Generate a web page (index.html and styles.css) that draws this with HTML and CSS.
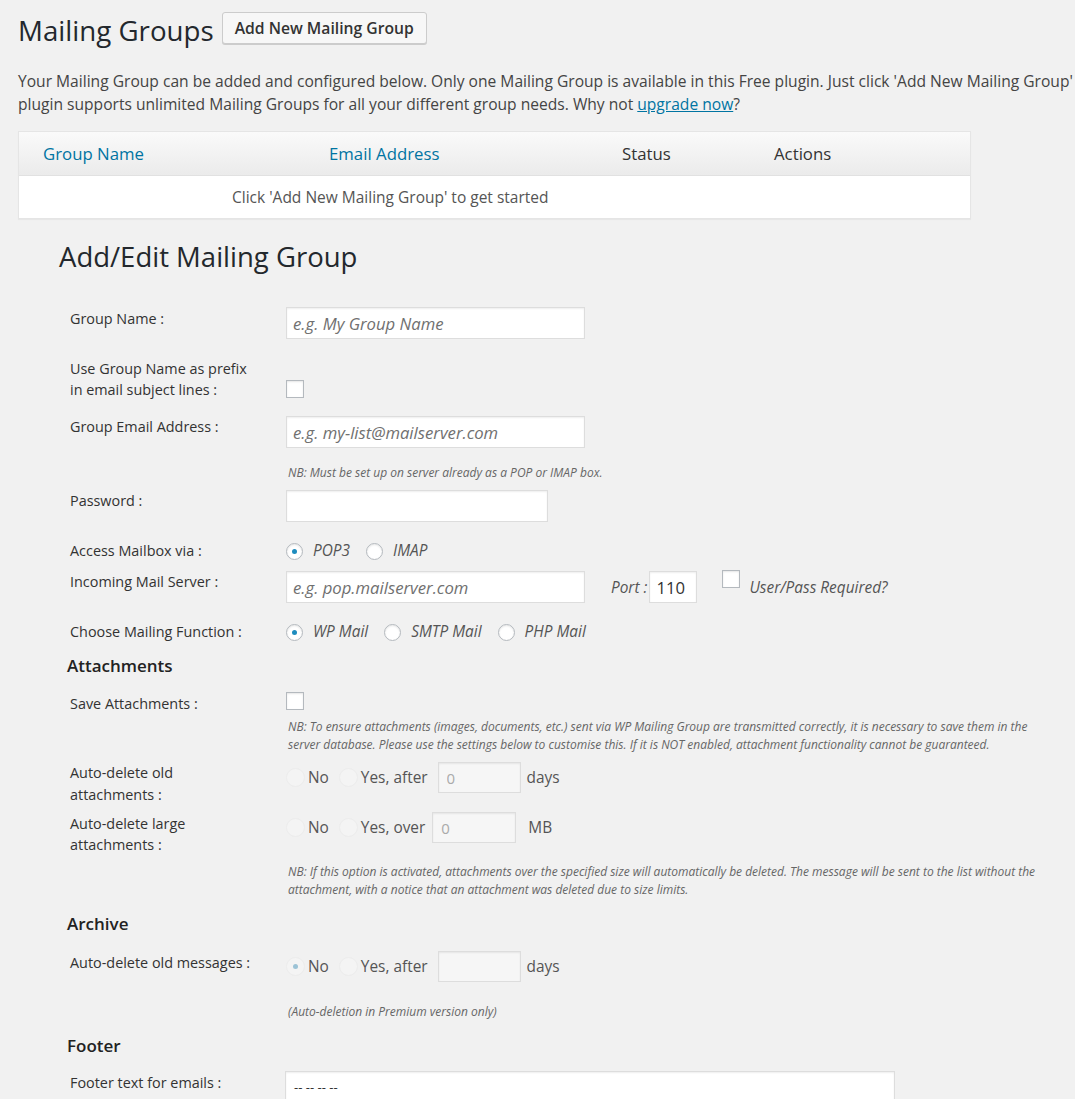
FILE: index.html
```html
<!DOCTYPE html>
<html>
<head>
<meta charset="utf-8">
<title>Mailing Groups</title>
<link rel="stylesheet" href="styles.css">
</head>
<body>
<div class="wrap">
  <div class="title-row">
    <h1 class="page-title">Mailing Groups</h1>
    <a class="add-btn">Add New Mailing Group</a>
  </div>
  <p class="intro">Your Mailing Group can be added and configured below. Only one Mailing Group is available in this Free plugin. Just click 'Add New Mailing Group' to get started. The Premium version of this<br>plugin supports unlimited Mailing Groups for all your different group needs. Why not <a class="link">upgrade now</a>?</p>

  <div class="list-table">
    <div class="list-head">
      <span class="col sortable">Group Name</span>
      <span class="col sortable">Email Address</span>
      <span class="col">Status</span>
      <span class="col">Actions</span>
    </div>
    <div class="list-body">Click 'Add New Mailing Group' to get started</div>
  </div>

  <h2 class="edit-title">Add/Edit Mailing Group</h2>

  <div class="form">
    <div class="row r1">
      <label class="lbl pt2">Group Name :</label>
      <div class="fld"><input class="text w299" type="text" placeholder="e.g. My Group Name"></div>
    </div>
    <div class="row r2">
      <label class="lbl lh21">Use Group Name as prefix<br>in email subject lines :</label>
      <div class="fld"><span class="checkbox cb-low"></span></div>
    </div>
    <div class="row r3">
      <label class="lbl lh22">Group Email Address :</label>
      <div class="fld"><input class="text w299" type="text" placeholder="e.g. my-list@mailserver.com"></div>
    </div>
    <p class="note n1">NB: Must be set up on server already as a POP or IMAP box.</p>
    <div class="row r4">
      <label class="lbl pt1">Password :</label>
      <div class="fld"><input class="text w262" type="password"></div>
    </div>
    <div class="row r5">
      <label class="lbl">Access Mailbox via :</label>
      <div class="fld opts">
        <span class="radio checked"></span><span class="opt-i">POP3</span>
        <span class="radio"></span><span class="opt-i">IMAP</span>
      </div>
    </div>
    <div class="row r6">
      <label class="lbl lh22">Incoming Mail Server :</label>
      <div class="fld inline">
        <input class="text w299" type="text" placeholder="e.g. pop.mailserver.com">
        <span class="port-lbl">Port :</span>
        <input class="text port" type="text" value="110">
        <span class="checkbox cb-port"></span>
        <span class="opt-i userpass">User/Pass Required?</span>
      </div>
    </div>
    <div class="row r7">
      <label class="lbl">Choose Mailing Function :</label>
      <div class="fld opts">
        <span class="radio checked"></span><span class="opt-i">WP Mail</span>
        <span class="radio"></span><span class="opt-i">SMTP Mail</span>
        <span class="radio"></span><span class="opt-i">PHP Mail</span>
      </div>
    </div>

    <h3 class="section h-att">Attachments</h3>
    <div class="row r8">
      <label class="lbl pt2">Save Attachments :</label>
      <div class="fld"><span class="checkbox"></span></div>
    </div>
    <p class="note n2">NB: To ensure attachments (images, documents, etc.) sent via WP Mailing Group are transmitted correctly, it is necessary to save them in the<br>server database. Please use the settings below to customise this. If it is NOT enabled, attachment functionality cannot be guaranteed.</p>
    <div class="row r9">
      <label class="lbl lh22">Auto-delete old<br>attachments :</label>
      <div class="fld inline">
        <span class="radio faded"></span><span class="opt opt-no">No</span>
        <span class="radio faded"></span><span class="opt opt-yes">Yes, after</span>
        <input class="text small w83" type="text" value="0" disabled>
        <span class="unit">days</span>
      </div>
    </div>
    <div class="row r10">
      <label class="lbl lh21 pt1">Auto-delete large<br>attachments :</label>
      <div class="fld inline">
        <span class="radio faded"></span><span class="opt opt-no">No</span>
        <span class="radio faded"></span><span class="opt opt-over">Yes, over</span>
        <input class="text small w84" type="text" value="0" disabled>
        <span class="unit mb">MB</span>
      </div>
    </div>
    <p class="note n3">NB: If this option is activated, attachments over the specified size will automatically be deleted. The message will be sent to the list without the<br>attachment, with a notice that an attachment was deleted due to size limits.</p>

    <h3 class="section h-arc">Archive</h3>
    <div class="row r11">
      <label class="lbl lh22 pt1">Auto-delete old messages :</label>
      <div class="fld inline">
        <span class="radio faded checked"></span><span class="opt opt-no">No</span>
        <span class="radio faded"></span><span class="opt opt-yes">Yes, after</span>
        <input class="text small w83" type="text" disabled>
        <span class="unit">days</span>
      </div>
    </div>
    <p class="note n4">(Auto-deletion in Premium version only)</p>

    <h3 class="section h-foot">Footer</h3>
    <div class="row r12">
      <label class="lbl pt2">Footer text for emails :</label>
      <div class="fld"><textarea class="footer-text">-- -- -- --</textarea></div>
    </div>
  </div>
</div>
</body>
</html>
```

FILE: styles.css
```css
html, body {
  margin: 0;
  padding: 0;
}
body {
  background: #f1f1f1;
  font-family: "Open Sans", "Noto Sans", sans-serif;
  color: #444;
  font-size: 13px;
  overflow: hidden;
}
.wrap {
  padding-left: 18px;
  width: 1300px;
}

/* title */
.title-row {
  display: flex;
  align-items: flex-start;
  padding-top: 12px;
  height: 32px;
}
.page-title {
  margin: 2px 0 0;
  font-size: 27.7px;
  font-weight: 400;
  color: #23282d;
  line-height: 32px;
}
.add-btn {
  margin-left: 8px;
  box-sizing: border-box;
  height: 32px;
  padding: 0 12px;
  display: flex;
  align-items: center;
  border: 1px solid #ccc;
  border-radius: 3px;
  background: #f7f7f7;
  box-shadow: 0 1px 0 #ccc;
  font-size: 15.7px;
  font-weight: 600;
  color: #333;
}

.intro {
  margin: 26px 0 0;
  font-size: 15.6px;
  line-height: 23px;
  color: #444;
  white-space: nowrap;
}
.link {
  color: #0074a2;
  text-decoration: underline;
}

/* list table */
.list-table {
  margin-top: 15px;
  width: 951px;
  border: 1px solid #e5e5e5;
  background: #fff;
  box-shadow: 0 1px 1px rgba(0,0,0,.04);
}
.list-head {
  display: grid;
  grid-template-columns: 286px 293px 152px auto;
  padding-left: 24px;
  height: 43px;
  align-items: center;
  background: linear-gradient(#fafafa, #ebebeb);
  border-bottom: 1px solid #e1e1e1;
  font-size: 16.8px;
  color: #333;
}
.sortable { color: #0074a2; }
.list-body {
  height: 42px;
  line-height: 42px;
  padding-left: 213px;
  font-size: 15.5px;
  color: #555;
}

.edit-title {
  margin: 21px 0 0 41px;
  font-size: 27.5px;
  font-weight: 400;
  color: #23282d;
  line-height: 34px;
}

/* form */
.form {
  padding-left: 52px;
}
.row {
  display: grid;
  grid-template-columns: 216px auto;
  align-items: start;
}
.lbl {
  font-size: 14.4px;
  line-height: 20px;
  color: #333;
}
.lh21 { line-height: 21px; }
.lh22 { line-height: 22px; }
.pt1 { padding-top: 1px; }
.pt2 { padding-top: 2px; }

.r1 { margin-top: 33px; }
.r2 { margin-top: 19px; }
.r3 { margin-top: 16px; }
.r4 { margin-top: 8px; }
.r5 { margin-top: 19px; }
.r6 { margin-top: 10px; }
.r7 { margin-top: 19px; }
.r8 { margin-top: 15px; }
.r9 { margin-top: 8px; }
.r10 { margin-top: 6px; }
.r11 { margin-top: 16px; }
.r12 { margin-top: 14px; }

.text {
  box-sizing: border-box;
  height: 32px;
  border: 1px solid #ddd;
  background: #fff;
  box-shadow: inset 0 1px 2px rgba(0,0,0,.07);
  font-family: "Open Sans", "Noto Sans", sans-serif;
  font-size: 16.7px;
  color: #333;
  padding: 0 6px;
  margin: 0;
  outline: none;
}
.text::placeholder {
  font-style: italic;
  color: #707070;
}
.w299 { width: 299px; }
.w262 { width: 262px; }
.port { width: 48px; padding: 0 6px; }
.small {
  height: 31px;
  background: #f6f6f6;
  color: #aaa;
  font-size: 15px;
  padding: 0 8px;
}
.w83 { width: 83px; }
.w84 { width: 84px; }

.checkbox {
  display: block;
  box-sizing: border-box;
  width: 18px;
  height: 18px;
  border: 1px solid #b4b9be;
  background: #fff;
  box-shadow: inset 0 1px 2px rgba(0,0,0,.1);
}
.cb-low { margin-top: 22px; }

.note {
  margin: 0;
  padding-left: 218px;
  font-size: 12px;
  line-height: 18px;
  font-style: italic;
  color: #666;
  white-space: nowrap;
}
.n1 { margin-top: 16px; }
.n2 { margin-top: 4px; }
.n3 { margin-top: 8px; }
.n4 { margin-top: 21px; }

/* options */
.opts, .inline {
  display: flex;
  align-items: center;
}
.opts { line-height: 20px; height: 20px; }
.radio {
  display: inline-block;
  box-sizing: border-box;
  width: 17px;
  height: 17px;
  border-radius: 50%;
  border: 1px solid #b4b9be;
  background: #fff;
  box-shadow: inset 0 1px 2px rgba(0,0,0,.1);
  position: relative;
  flex: none;
}
.radio.checked::after {
  content: "";
  position: absolute;
  left: 5px;
  top: 5px;
  width: 5px;
  height: 5px;
  border-radius: 50%;
  background: #1e8cbe;
}
.radio.faded {
  width: 19px;
  height: 19px;
  border: 1px solid #ececec;
  background: #f4f4f4;
  box-shadow: none;
}
.radio.faded.checked::after {
  left: 6px;
  top: 6px;
  width: 5px;
  height: 5px;
  background: #9cc3d6;
}
.opt-i {
  font-style: italic;
  font-size: 15.4px;
  color: #555;
  margin-left: 10px;
  margin-right: 16px;
}
.opt {
  font-size: 15.4px;
  color: #555;
  margin-left: 3px;
}
.opt-no { margin-right: 10px; }
.opt-yes { margin-right: 10px; }
.opt-over { margin-right: 7px; }
.unit {
  font-size: 15.4px;
  color: #555;
  margin-left: 6px;
}
.unit.mb { margin-left: 12px; }

.port-lbl {
  font-style: italic;
  font-size: 15.4px;
  color: #555;
  margin-left: 26px;
  margin-right: 2px;
}
.cb-port {
  margin-left: 25px;
  align-self: flex-start;
  margin-top: -1px;
}
.userpass { margin-left: 9px; margin-right: 0; }

.section {
  margin: 0;
  font-size: 17px;
  font-weight: 600;
  color: #222;
  line-height: 22px;
  margin-left: -3px;
}
.h-att { margin-top: 13px; }
.h-arc { margin-top: 14px; }
.h-foot { margin-top: 14px; }

.footer-text {
  box-sizing: border-box;
  width: 610px;
  height: 100px;
  margin-left: -1px;
  border: 1px solid #ddd;
  background: #fff;
  box-shadow: inset 0 1px 2px rgba(0,0,0,.07);
  font-family: "Open Sans", "Noto Sans", sans-serif;
  font-size: 13px;
  color: #333;
  padding: 6px 8px;
  resize: none;
  display: block;
}
```
